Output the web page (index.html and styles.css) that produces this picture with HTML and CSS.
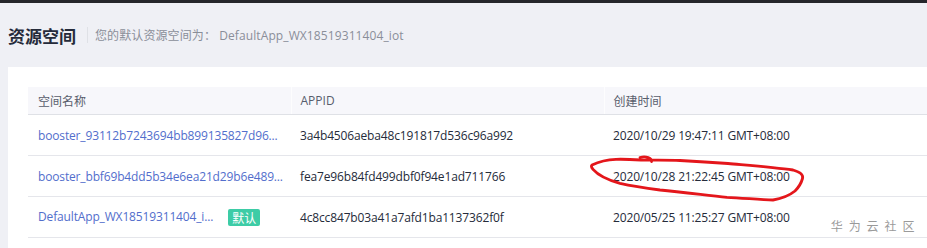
FILE: index.html
```html
<!DOCTYPE html>
<html lang="zh-CN">
<head>
<meta charset="utf-8">
<title>资源空间</title>
<link rel="stylesheet" href="styles.css">
</head>
<body>
<div class="topbar"></div>
<div class="page">
  <div class="page-head">
    <h1 class="title">资源空间</h1>
    <span class="divider"></span>
    <span class="subtitle">您的默认资源空间为： DefaultApp_WX18519311404_iot</span>
  </div>
  <div class="card">
    <table class="table">
      <colgroup>
        <col class="c-name">
        <col class="c-id">
        <col class="c-time">
      </colgroup>
      <thead>
        <tr>
          <th>空间名称</th>
          <th>APPID</th>
          <th>创建时间</th>
        </tr>
      </thead>
      <tbody>
        <tr>
          <td><a class="link" href="#">booster_93112b7243694bb899135827d96...</a></td>
          <td>3a4b4506aeba48c191817d536c96a992</td>
          <td>2020/10/29 19:47:11 GMT+08:00</td>
        </tr>
        <tr>
          <td><a class="link" href="#">booster_bbf69b4dd5b34e6ea21d29b6e489...</a></td>
          <td>fea7e96b84fd499dbf0f94e1ad711766</td>
          <td>2020/10/28 21:22:45 GMT+08:00</td>
        </tr>
        <tr>
          <td><a class="link" href="#">DefaultApp_WX18519311404_i...</a><span class="badge">默认</span></td>
          <td>4c8cc847b03a41a7afd1ba1137362f0f</td>
          <td>2020/05/25 11:25:27 GMT+08:00</td>
        </tr>
      </tbody>
    </table>
  </div>
</div>
<svg class="scribble" width="927" height="248" viewBox="0 0 927 248">
  <path d="M640 157.5 C646 156 652 158 651.5 161.5 M592 165 C600 161 608 159.5 616 159.3 C625 159 633 159.5 641 160 C655 160.3 668 160 680 160.5 C700 161.5 715 162.5 728 163.5 C750 165.5 775 167.5 793 170 C800 172 803.5 175 802.5 178.5 C801 184 798 188 795 191 C790 195 782 198.5 773 200 C760 199.5 742 198 727 197.3 C705 195 682 192 660 190 C645 188 632 186 620 183.3 C608 180 598 175 593 169.3 C591 167 591 166 592 165" fill="none" stroke="#e4161b" stroke-width="2.8" stroke-linecap="round" stroke-linejoin="round"/>
</svg>
<div class="watermark">华 为 云 社 区</div>
</body>
</html>
```
FILE: styles.css
```css
html, body {
  margin: 0;
  padding: 0;
}
body {
  background: #eff0f5;
  font-family: "Open Sans", "Noto Sans CJK SC", sans-serif;
  color: #252b3a;
  width: 927px;
  height: 248px;
  overflow: hidden;
  position: relative;
}
.topbar {
  height: 3px;
  background: #25262b;
}
.page {
  padding: 0 0 0 8px;
}
.page-head {
  display: flex;
  align-items: center;
  height: 64px;
}
.title {
  margin: 0;
  font-family: "Noto Sans CJK SC", sans-serif;
  font-size: 17px;
  font-weight: 700;
  color: #252b3a;
}
.divider {
  width: 1px;
  height: 16px;
  background: #dfe1e6;
  margin: 0 7px 0 11px;
}
.subtitle {
  font-size: 12px;
  color: #8a8e99;
  letter-spacing: 0.1px;
}
.card {
  background: #fff;
  padding: 20px 0 0 20px;
  height: 161px;
}
.table {
  width: 100%;
  table-layout: fixed;
  border-collapse: collapse;
  font-size: 12px;
  letter-spacing: -0.15px;
}
.c-name { width: 263px; }
.c-id { width: 313px; }
.table th {
  background: #f7f7fb;
  font-weight: 400;
  color: #575d6c;
  text-align: left;
  height: 27px;
  padding: 0 9px;
  border-bottom: 1px solid #dfe1e6;
  border-left: 1px solid #fdfdfe;
  letter-spacing: 0;
}
.table th:first-child {
  border-left: none;
  padding-left: 10px;
}
.table td {
  height: 40px;
  padding: 0 9px;
  border-bottom: 1px solid #e5e6eb;
  white-space: nowrap;
  overflow: hidden;
  color: #252b3a;
}
.table td:first-child {
  padding-left: 10px;
}
.link {
  color: #526ecc;
  text-decoration: none;
}
.badge {
  display: inline-block;
  margin-left: 15px;
  padding: 0 4px;
  height: 17px;
  line-height: 17px;
  background: #3dcca6;
  color: #fff;
  font-size: 12px;
  letter-spacing: 0;
  border-radius: 2px;
  font-family: "Noto Sans CJK SC", sans-serif;
  vertical-align: middle;
}
.scribble {
  position: absolute;
  left: 0;
  top: 0;
  pointer-events: none;
}
.watermark {
  position: absolute;
  right: 11px;
  top: 217px;
  font-size: 12px;
  color: #9a9a9a;
  font-family: "Noto Sans CJK SC", sans-serif;
  letter-spacing: 1.6px;
  background: rgba(255,255,255,0.6);
}
```
